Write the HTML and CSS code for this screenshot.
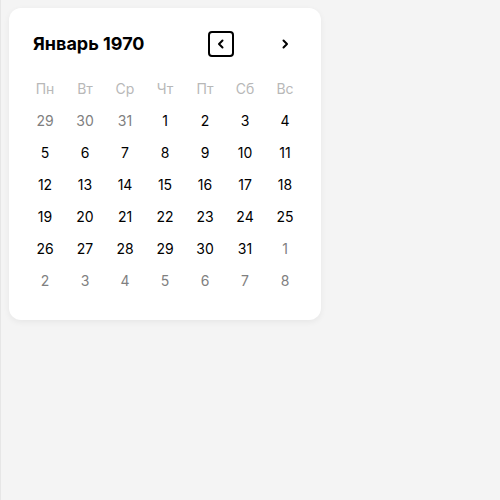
FILE: index.html
```html
<!DOCTYPE html>
<html lang="ru">
<head>
<meta charset="utf-8">
<link rel="stylesheet" href="styles.css">
</head>
<body>
<div class="page">
  <div class="card">
    <div class="header">
      <div class="title">Январь 1970</div>
      <div class="nav">
        <button class="btn btn-prev" aria-label="prev">
          <svg width="12" height="12" viewBox="0 0 12 12"><path d="M7.5 2.5 L4 6 L7.5 9.5" fill="none" stroke="#000" stroke-width="2" stroke-linecap="round" stroke-linejoin="round"/></svg>
        </button>
        <button class="btn btn-next" aria-label="next">
          <svg width="12" height="12" viewBox="0 0 12 12"><path d="M4.5 2.5 L8 6 L4.5 9.5" fill="none" stroke="#000" stroke-width="2" stroke-linecap="round" stroke-linejoin="round"/></svg>
        </button>
      </div>
    </div>
    <div class="grid">
      <div class="wd">Пн</div><div class="wd">Вт</div><div class="wd">Ср</div><div class="wd">Чт</div><div class="wd">Пт</div><div class="wd">Сб</div><div class="wd">Вс</div>
      <div class="d o">29</div><div class="d o">30</div><div class="d o">31</div><div class="d">1</div><div class="d">2</div><div class="d">3</div><div class="d">4</div>
      <div class="d">5</div><div class="d">6</div><div class="d">7</div><div class="d">8</div><div class="d">9</div><div class="d">10</div><div class="d">11</div>
      <div class="d">12</div><div class="d">13</div><div class="d">14</div><div class="d">15</div><div class="d">16</div><div class="d">17</div><div class="d">18</div>
      <div class="d">19</div><div class="d">20</div><div class="d">21</div><div class="d">22</div><div class="d">23</div><div class="d">24</div><div class="d">25</div>
      <div class="d">26</div><div class="d">27</div><div class="d">28</div><div class="d">29</div><div class="d">30</div><div class="d">31</div><div class="d o">1</div>
      <div class="d o">2</div><div class="d o">3</div><div class="d o">4</div><div class="d o">5</div><div class="d o">6</div><div class="d o">7</div><div class="d o">8</div>
    </div>
  </div>
</div>
</body>
</html>
```

FILE: styles.css
```css
html, body {
  margin: 0;
  padding: 0;
  height: 100%;
}
body {
  background: #f4f4f4;
  font-family: Inter, "Noto Sans", sans-serif;
  color: #000;
}
.page {
  box-sizing: border-box;
  height: 100%;
  border-left: 1px solid #e6e6e6;
  padding: 8px 0 0 8px;
}
.card {
  width: 312px;
  box-sizing: border-box;
  background: #fff;
  border-radius: 12px;
  box-shadow: 0 2px 6px rgba(0,0,0,0.06);
  padding: 16px 16px 24px 16px;
}
.header {
  display: flex;
  align-items: center;
  justify-content: space-between;
  height: 40px;
  padding-left: 8px;
  margin-bottom: 8px;
}
.title {
  font-size: 18px;
  font-weight: 700;
  letter-spacing: 0;
  margin-top: -2px;
}
.nav {
  display: flex;
  align-items: center;
  gap: 38px;
  margin-right: 7px;
}
.btn {
  width: 26px;
  height: 26px;
  padding: 0;
  margin: 0;
  display: flex;
  align-items: center;
  justify-content: center;
  background: transparent;
  border: 2px solid transparent;
  border-radius: 4px;
  box-sizing: border-box;
}
.btn-prev {
  border-color: #000;
}
.grid {
  display: grid;
  grid-template-columns: repeat(7, 40px);
  grid-auto-rows: 32px;
}
.wd, .d {
  display: flex;
  align-items: center;
  justify-content: center;
  font-size: 14px;
}
.wd {
  color: #b8b8b8;
}
.d.o {
  color: #808080;
}
```
